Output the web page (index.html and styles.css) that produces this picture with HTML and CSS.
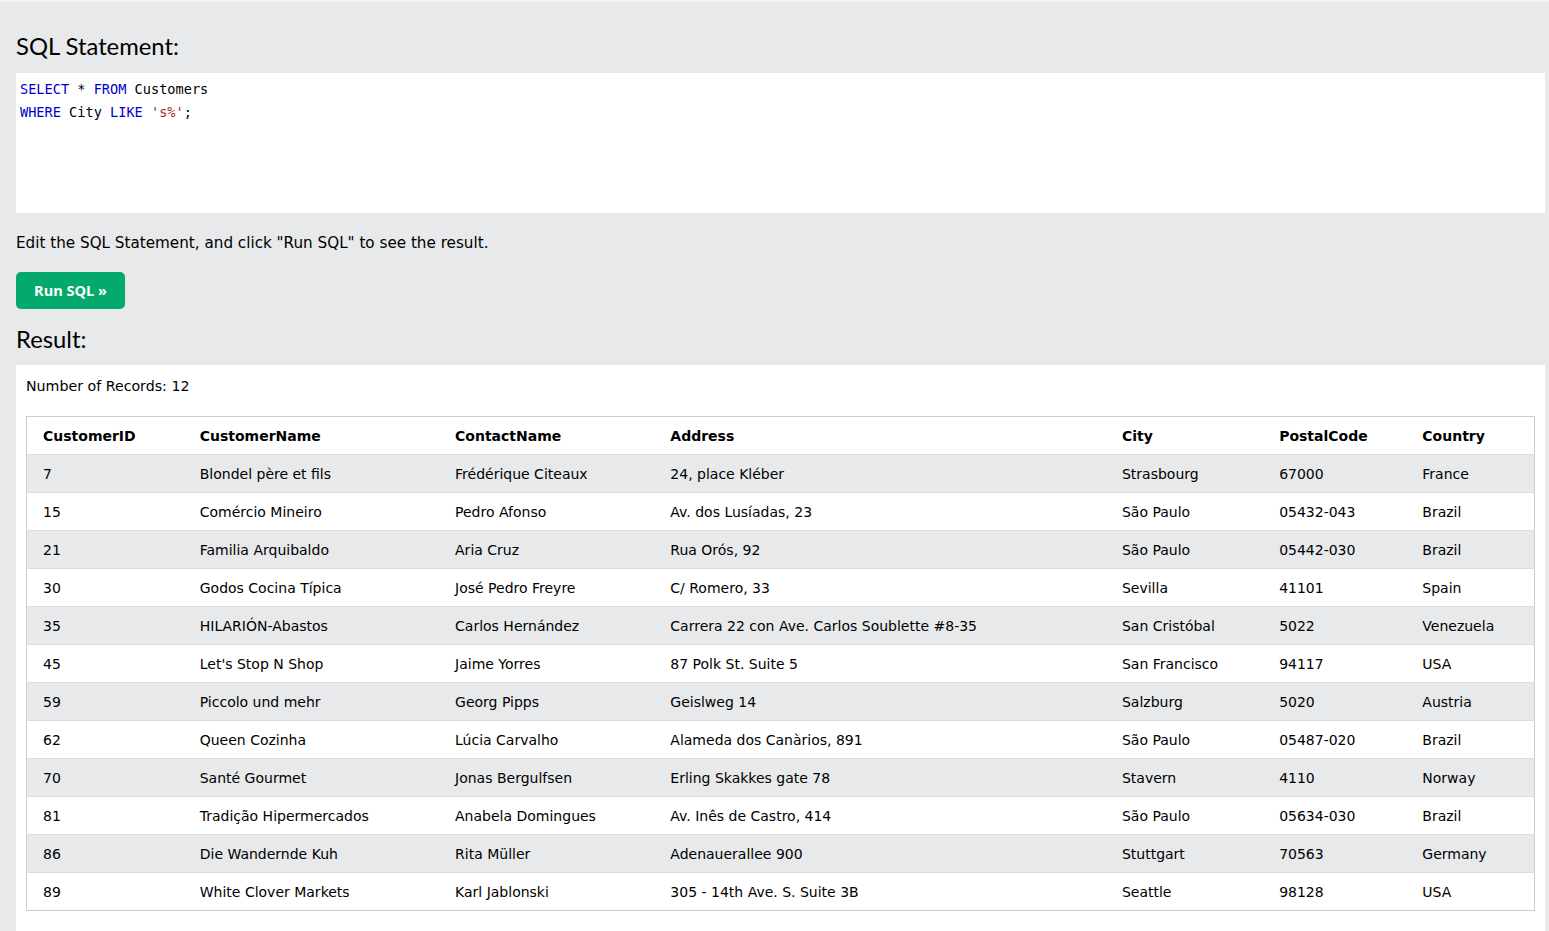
FILE: index.html
```html
<!DOCTYPE html>
<html>
<head>
<meta charset="utf-8">
<link rel="stylesheet" href="styles.css">
</head>
<body>
<div class="page">
  <h2 class="title">SQL Statement:</h2>
  <div class="code"><div class="line"><span class="kw">SELECT</span> * <span class="kw">FROM</span> Customers</div><div class="line"><span class="kw">WHERE</span> City <span class="kw">LIKE</span> <span class="str">'s%'</span>;</div></div>
  <p class="hint">Edit the SQL Statement, and click "Run SQL" to see the result.</p>
  <button class="run">Run SQL »</button>
  <h2 class="title result-title">Result:</h2>
  <div class="result">
    <div class="count">Number of Records: 12</div>
    <table class="grid">
      <colgroup>
        <col class="c1"><col class="c2"><col class="c3"><col class="c4"><col class="c5"><col class="c6"><col class="c7">
      </colgroup>
      <thead>
        <tr><th>CustomerID</th><th>CustomerName</th><th>ContactName</th><th>Address</th><th>City</th><th>PostalCode</th><th>Country</th></tr>
      </thead>
      <tbody>
        <tr><td>7</td><td>Blondel père et fils</td><td>Frédérique Citeaux</td><td>24, place Kléber</td><td>Strasbourg</td><td>67000</td><td>France</td></tr>
        <tr><td>15</td><td>Comércio Mineiro</td><td>Pedro Afonso</td><td>Av. dos Lusíadas, 23</td><td>São Paulo</td><td>05432-043</td><td>Brazil</td></tr>
        <tr><td>21</td><td>Familia Arquibaldo</td><td>Aria Cruz</td><td>Rua Orós, 92</td><td>São Paulo</td><td>05442-030</td><td>Brazil</td></tr>
        <tr><td>30</td><td>Godos Cocina Típica</td><td>José Pedro Freyre</td><td>C/ Romero, 33</td><td>Sevilla</td><td>41101</td><td>Spain</td></tr>
        <tr><td>35</td><td>HILARIÓN-Abastos</td><td>Carlos Hernández</td><td>Carrera 22 con Ave. Carlos Soublette #8-35</td><td>San Cristóbal</td><td>5022</td><td>Venezuela</td></tr>
        <tr><td>45</td><td>Let's Stop N Shop</td><td>Jaime Yorres</td><td>87 Polk St. Suite 5</td><td>San Francisco</td><td>94117</td><td>USA</td></tr>
        <tr><td>59</td><td>Piccolo und mehr</td><td>Georg Pipps</td><td>Geislweg 14</td><td>Salzburg</td><td>5020</td><td>Austria</td></tr>
        <tr><td>62</td><td>Queen Cozinha</td><td>Lúcia Carvalho</td><td>Alameda dos Canàrios, 891</td><td>São Paulo</td><td>05487-020</td><td>Brazil</td></tr>
        <tr><td>70</td><td>Santé Gourmet</td><td>Jonas Bergulfsen</td><td>Erling Skakkes gate 78</td><td>Stavern</td><td>4110</td><td>Norway</td></tr>
        <tr><td>81</td><td>Tradição Hipermercados</td><td>Anabela Domingues</td><td>Av. Inês de Castro, 414</td><td>São Paulo</td><td>05634-030</td><td>Brazil</td></tr>
        <tr><td>86</td><td>Die Wandernde Kuh</td><td>Rita Müller</td><td>Adenauerallee 900</td><td>Stuttgart</td><td>70563</td><td>Germany</td></tr>
        <tr><td>89</td><td>White Clover Markets</td><td>Karl Jablonski</td><td>305 - 14th Ave. S. Suite 3B</td><td>Seattle</td><td>98128</td><td>USA</td></tr>
      </tbody>
    </table>
  </div>
</div>
</body>
</html>
```

FILE: styles.css
```css
html, body {
  margin: 0;
  padding: 0;
}
body {
  background: #e7e9eb;
  border-top: 2px solid #f3f3f3;
  font-family: "DejaVu Sans", Verdana, sans-serif;
  font-size: 15px;
  color: #000;
  overflow: hidden;
}
.page {
  padding: 0 4px 0 16px;
}
.title {
  font-family: Lato, "Open Sans", sans-serif;
  font-weight: 400;
  font-size: 23.8px;
  line-height: 32px;
  margin: 0;
  padding-top: 28px;
  height: 43px;
  color: #000;
}
.code {
  background: #fff;
  height: 140px;
  box-sizing: border-box;
  padding: 5px 4px;
  font-family: "DejaVu Sans Mono", "Liberation Mono", monospace;
  font-size: 13.6px;
  line-height: 23px;
  color: #000;
}
.kw { color: #0000cd; }
.str { color: #a52a2a; }
.hint {
  margin: 0;
  padding-top: 21px;
  height: 38px;
  line-height: 19px;
  font-size: 15.2px;
}
.run {
  display: block;
  background: #04aa6d;
  color: #fff;
  border: none;
  border-radius: 5px;
  width: 109px;
  height: 37px;
  padding: 0;
  font-family: "Open Sans", sans-serif;
  font-weight: 700;
  font-size: 14.5px;
  cursor: pointer;
}
.result-title {
  padding-top: 14px;
  height: 42px;
  line-height: 32px;
}
.result {
  background: #fff;
  padding: 10px 10px 30px;
}
.count {
  font-size: 14.2px;
  line-height: 22px;
  margin-top: 0;
  height: 41px;
}
.grid {
  border-collapse: collapse;
  table-layout: fixed;
  width: 100%;
  border: 1px solid #cccccc;
  font-size: 14px;
}
.c1 { width: 165px; }
.c2 { width: 255px; }
.c3 { width: 215px; }
.c4 { width: 451px; }
.c5 { width: 157px; }
.c6 { width: 143px; }
.c7 { width: 120px; }
.grid th, .grid td {
  text-align: left;
  padding: 0 8px;
  height: 38px;
  box-sizing: border-box;
  white-space: nowrap;
  overflow: hidden;
}
.grid th:first-child, .grid td:first-child {
  padding-left: 16px;
}
.grid th {
  font-weight: 700;
}
.grid tr {
  border-bottom: 1px solid #dddddd;
}
.grid tbody tr:nth-child(odd) {
  background: #e7e9eb;
}
.grid tbody tr:last-child {
  border-bottom: none;
}
```
